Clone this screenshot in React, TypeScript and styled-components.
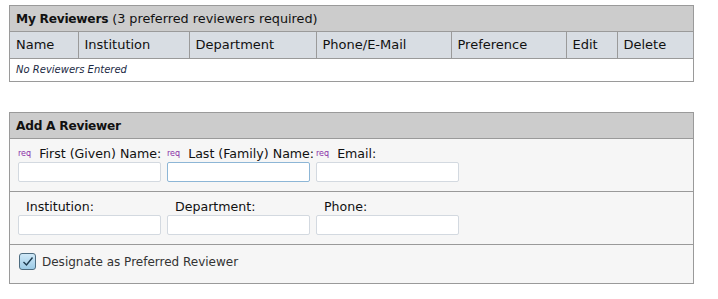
import React from "react";
import styled, { createGlobalStyle } from "styled-components";

const Global = createGlobalStyle`
  html, body { margin: 0; padding: 0; background: #fff; }
  body { font-family: "DejaVu Sans", Verdana, sans-serif; font-size: 13px; color: #111; }
  * { box-sizing: border-box; }
`;

const Page = styled.div`
  padding: 5px 0 0 9px;
  display: flex;
  flex-direction: column;
  gap: 30px;
`;

const Panel = styled.section`
  width: 685px;
  border: 1px solid #9a9a9a;
  background: #f6f6f6;
`;

const PanelHeader = styled.div`
  height: 26px;
  background: #cccccc;
  border-bottom: 1px solid #9a9a9a;
  display: flex;
  align-items: center;
  padding: 0 6px;
  font-size: 12.8px;
  color: #111;
`;

const Strong = styled.b`
  font-weight: bold;
  font-size: 12.2px;
  letter-spacing: -0.25px;
  margin-right: 4px;
`;

const Table = styled.table`
  width: 100%;
  border-collapse: collapse;
  background: #fff;
`;

const Th = styled.th<{ $w: number }>`
  width: ${(p) => p.$w}px;
  height: 26px;
  background: #d8dde3;
  border-left: 1px solid #9a9a9a;
  border-bottom: 1px solid #9a9a9a;
  text-align: left;
  font-weight: normal;
  padding: 0 6px;
  font-size: 13px;
  &:first-child { border-left: none; }
`;

const EmptyCell = styled.td`
  height: 23px;
  padding: 0 6px;
  font-size: 10px;
  font-style: italic;
  color: #1c2a44;
`;

const FieldRow = styled.div`
  display: flex;
  gap: 6px;
  padding: 7px 8px 9px;
  border-bottom: 1px solid #9a9a9a;
`;

const Field = styled.label`
  display: flex;
  flex-direction: column;
  width: 143px;
`;

const LabelLine = styled.span<{ $indent?: boolean }>`
  display: flex;
  align-items: baseline;
  white-space: nowrap;
  height: 16px;
  padding-left: ${(p) => (p.$indent ? "8px" : "0")};
  font-size: 12.6px;
  color: #111;
`;

const Req = styled.span`
  font-size: 8px;
  color: #8a2fa8;
  margin-right: 8px;
  position: relative;
  top: -2px;
`;

const Input = styled.input<{ $focus?: boolean }>`
  width: 143px;
  height: 20px;
  border: 1px solid ${(p) => (p.$focus ? "#8db6d6" : "#d3d9e0")};
  border-radius: 2px;
  background: #fff;
  font: inherit;
  outline: none;
`;

const CheckRow = styled.label`
  display: flex;
  align-items: center;
  gap: 6px;
  padding: 8px 9px 13px;
  font-size: 12px;
  color: #333;
`;

const CheckBox = styled.span`
  width: 17px;
  height: 17px;
  border: 1px solid #4d6c80;
  border-radius: 3px;
  background: linear-gradient(#cfe8f7, #9ccbe6);
  display: flex;
  align-items: center;
  justify-content: center;
`;

const cols: [string, number][] = [
  ["Name", 68],
  ["Institution", 111],
  ["Department", 127],
  ["Phone/E-Mail", 135],
  ["Preference", 115],
  ["Edit", 51],
  ["Delete", 76],
];

export default function App() {
  return (
    <>
      <Global />
      <Page>
        <Panel>
          <PanelHeader>
            <Strong>My Reviewers</Strong>(3 preferred reviewers required)
          </PanelHeader>
          <Table>
            <thead>
              <tr>
                {cols.map(([c, w]) => (
                  <Th key={c} $w={w}>
                    {c}
                  </Th>
                ))}
              </tr>
            </thead>
            <tbody>
              <tr>
                <EmptyCell colSpan={7}>No Reviewers Entered</EmptyCell>
              </tr>
            </tbody>
          </Table>
        </Panel>

        <Panel>
          <PanelHeader>
            <Strong>Add A Reviewer</Strong>
          </PanelHeader>
          <FieldRow>
            <Field>
              <LabelLine>
                <Req>req</Req>First (Given) Name:
              </LabelLine>
              <Input />
            </Field>
            <Field>
              <LabelLine>
                <Req>req</Req>Last (Family) Name:
              </LabelLine>
              <Input $focus />
            </Field>
            <Field>
              <LabelLine>
                <Req>req</Req>Email:
              </LabelLine>
              <Input />
            </Field>
          </FieldRow>
          <FieldRow>
            <Field>
              <LabelLine $indent>Institution:</LabelLine>
              <Input />
            </Field>
            <Field>
              <LabelLine $indent>Department:</LabelLine>
              <Input />
            </Field>
            <Field>
              <LabelLine $indent>Phone:</LabelLine>
              <Input />
            </Field>
          </FieldRow>
          <CheckRow>
            <CheckBox>
              <svg width="12" height="11" viewBox="0 0 12 11">
                <path d="M1.5 6 L4.5 9 L10.5 1.5" fill="none" stroke="#1d3a4e" strokeWidth="1.4" />
              </svg>
            </CheckBox>
            Designate as Preferred Reviewer
          </CheckRow>
        </Panel>
      </Page>
    </>
  );
}
